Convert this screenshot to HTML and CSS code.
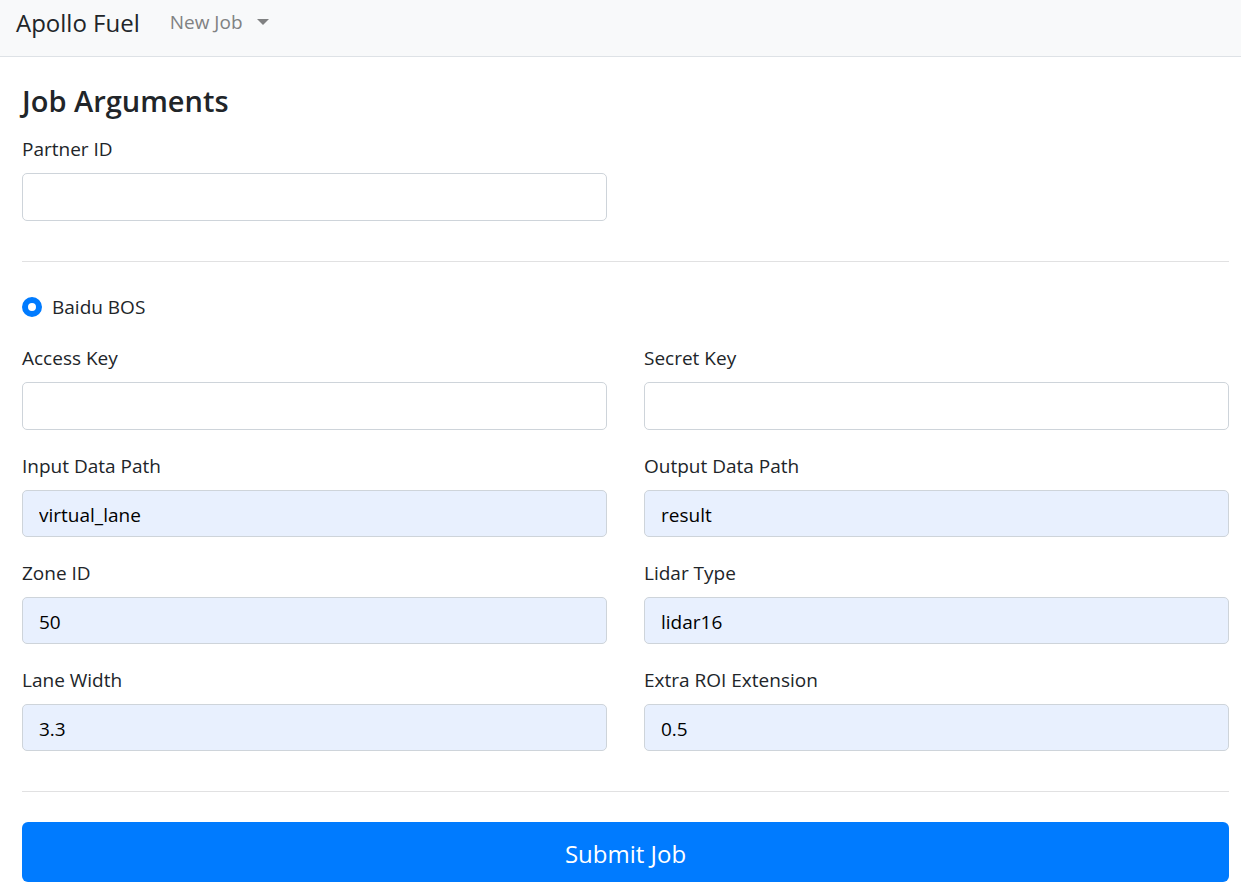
FILE: index.html
```html
<!DOCTYPE html>
<html lang="en">
<head>
<meta charset="utf-8">
<meta name="viewport" content="width=device-width, initial-scale=1">
<title>Apollo Fuel</title>
<link rel="stylesheet" href="styles.css">
</head>
<body>
<nav class="navbar">
  <a class="brand" href="#">Apollo Fuel</a>
  <button class="nav-toggle" type="button" aria-haspopup="true">New Job<span class="caret"></span></button>
</nav>
<main class="page">
  <h1 class="title">Job Arguments</h1>
  <form class="job-form" autocomplete="off">
    <div class="grid">
      <div class="field">
        <label class="label" for="partner">Partner ID</label>
        <input class="input" id="partner" type="text">
      </div>
    </div>
    <hr class="divider">
    <div class="choice">
      <input class="radio" id="bos" name="storage" type="radio" checked>
      <label class="choice-label" for="bos">Baidu BOS</label>
    </div>
    <div class="grid">
      <div class="field">
        <label class="label" for="access">Access Key</label>
        <input class="input" id="access" type="text">
      </div>
      <div class="field">
        <label class="label" for="secret">Secret Key</label>
        <input class="input" id="secret" type="password">
      </div>
      <div class="field">
        <label class="label" for="input-path">Input Data Path</label>
        <input class="input filled" id="input-path" type="text" value="virtual_lane">
      </div>
      <div class="field">
        <label class="label" for="output-path">Output Data Path</label>
        <input class="input filled" id="output-path" type="text" value="result">
      </div>
      <div class="field">
        <label class="label" for="zone">Zone ID</label>
        <input class="input filled" id="zone" type="text" value="50">
      </div>
      <div class="field">
        <label class="label" for="lidar">Lidar Type</label>
        <input class="input filled" id="lidar" type="text" value="lidar16">
      </div>
      <div class="field">
        <label class="label" for="lane">Lane Width</label>
        <input class="input filled" id="lane" type="text" value="3.3">
      </div>
      <div class="field">
        <label class="label" for="roi">Extra ROI Extension</label>
        <input class="input filled" id="roi" type="text" value="0.5">
      </div>
    </div>
    <hr class="divider">
    <button class="submit" type="submit">Submit Job</button>
  </form>
</main>
</body>
</html>
```
FILE: styles.css
```css
* {
  box-sizing: border-box;
}

body {
  margin: 0;
  background: #fff;
  color: #212529;
  font-family: "Segoe UI", "Open Sans", "Noto Sans", sans-serif;
  font-size: 19px;
  line-height: 30px;
}

.navbar {
  display: flex;
  align-items: center;
  gap: 30px;
  padding: 3px 16px 13px;
  background: #f8f9fa;
  border-bottom: 1px solid #dee2e6;
}

.brand {
  color: #212529;
  font-size: 24px;
  line-height: 40px;
  text-decoration: none;
}

.nav-toggle {
  display: flex;
  align-items: center;
  gap: 14px;
  padding: 0 0 2px;
  border: 0;
  background: none;
  color: #808182;
  font: inherit;
}

.caret {
  border: 6px solid transparent;
  border-top-color: currentColor;
  border-bottom: 0;
}

.page {
  padding: 24px 12px 2px 22px;
}

.title {
  margin: 0 0 12px;
  font-size: 29px;
  font-weight: 600;
  line-height: 40px;
}

.grid {
  display: grid;
  grid-template-columns: 1fr 1fr;
  gap: 20px 37px;
}

.field {
  display: flex;
  flex-direction: column;
  gap: 8px;
}

.label {
  line-height: 32px;
}

.input {
  width: 100%;
  height: 48px;
  padding: 2px 16px 0;
  border: 1px solid #ced4da;
  border-radius: 5px;
  background: #fff;
  color: #000;
  font: inherit;
}

.filled {
  height: 47px;
  background: #e8f0fe;
}

.divider {
  margin: 40px 0 30px;
  border: 0;
  border-top: 1px solid #e1e1e2;
}

.choice {
  display: flex;
  align-items: center;
  gap: 10px;
  margin-bottom: 20px;
}

.radio {
  appearance: none;
  width: 20px;
  height: 20px;
  margin: 0;
  border: 6px solid #007bff;
  border-radius: 50%;
  background: #fff;
}

.submit {
  display: block;
  width: 100%;
  height: 60px;
  padding: 4px 16px 0;
  border: 0;
  border-radius: 6px;
  background: #007bff;
  color: #fff;
  font: inherit;
  font-size: 24px;
}
```
